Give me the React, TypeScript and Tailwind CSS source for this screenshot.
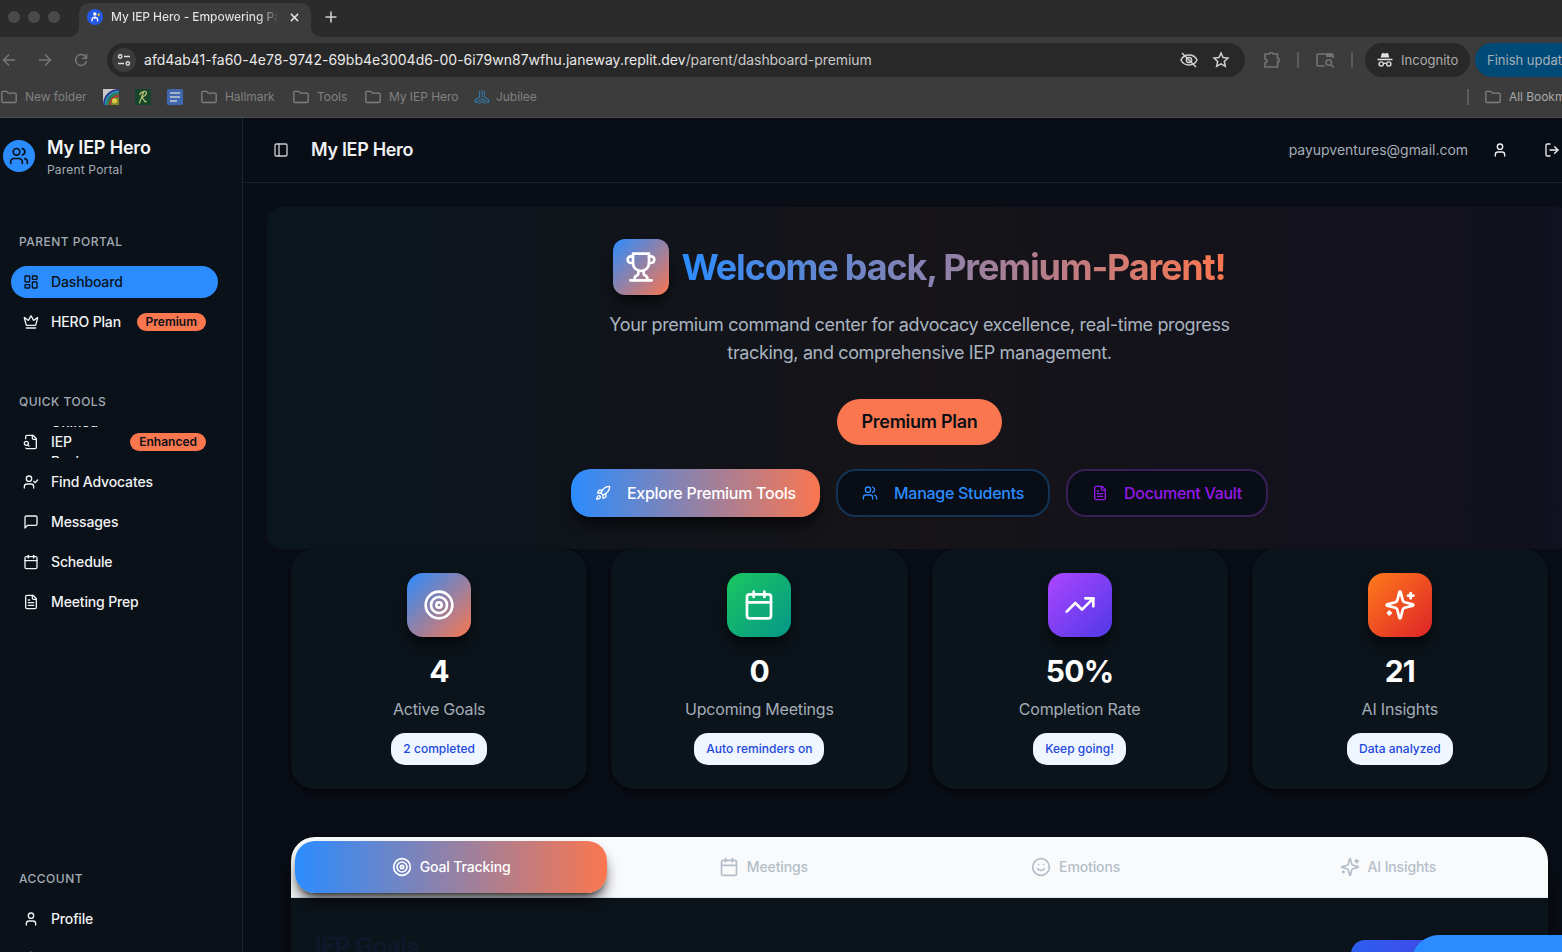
import React from "react";

type IconProps = { className?: string; strokeWidth?: number };

function Svg({ className, strokeWidth = 2, children }: IconProps & { children: React.ReactNode }) {
  return (
    <svg
      viewBox="0 0 24 24"
      fill="none"
      stroke="currentColor"
      strokeWidth={strokeWidth}
      strokeLinecap="round"
      strokeLinejoin="round"
      className={`shrink-0 ${className ?? ""}`}
    >
      {children}
    </svg>
  );
}

const Users = (p: IconProps) => (
  <Svg {...p}>
    <path d="M16 21v-2a4 4 0 0 0-4-4H6a4 4 0 0 0-4 4v2" />
    <circle cx="9" cy="7" r="4" />
    <path d="M22 21v-2a4 4 0 0 0-3-3.87" />
    <path d="M16 3.13a4 4 0 0 1 0 7.75" />
  </Svg>
);
const Dashboard = (p: IconProps) => (
  <Svg {...p}>
    <rect width="7" height="9" x="3" y="3" rx="1" />
    <rect width="7" height="5" x="14" y="3" rx="1" />
    <rect width="7" height="9" x="14" y="12" rx="1" />
    <rect width="7" height="5" x="3" y="16" rx="1" />
  </Svg>
);
const Crown = (p: IconProps) => (
  <Svg {...p}>
    <path d="M11.562 3.266a.5.5 0 0 1 .876 0L15.39 8.87a1 1 0 0 0 1.516.294L21.183 5.5a.5.5 0 0 1 .798.519l-2.834 10.246a1 1 0 0 1-.956.734H5.81a1 1 0 0 1-.957-.734L2.02 6.02a.5.5 0 0 1 .798-.519l4.276 3.664a1 1 0 0 0 1.516-.294z" />
    <path d="M5 21h14" />
  </Svg>
);
const FileSearch = (p: IconProps) => (
  <Svg {...p}>
    <path d="M14 2v4a2 2 0 0 0 2 2h4" />
    <path d="M4.268 21a2 2 0 0 0 1.727 1H18a2 2 0 0 0 2-2V7l-5-5H6a2 2 0 0 0-2 2v3" />
    <path d="m9 18-1.5-1.5" />
    <circle cx="5" cy="14" r="3" />
  </Svg>
);
const UserCheck = (p: IconProps) => (
  <Svg {...p}>
    <path d="M16 21v-2a4 4 0 0 0-4-4H6a4 4 0 0 0-4 4v2" />
    <circle cx="9" cy="7" r="4" />
    <path d="m16 11 2 2 4-4" />
  </Svg>
);
const Message = (p: IconProps) => (
  <Svg {...p}>
    <path d="M21 15a2 2 0 0 1-2 2H7l-4 4V5a2 2 0 0 1 2-2h14a2 2 0 0 1 2 2z" />
  </Svg>
);
const Calendar = (p: IconProps) => (
  <Svg {...p}>
    <path d="M8 2v4" />
    <path d="M16 2v4" />
    <rect width="18" height="18" x="3" y="4" rx="2" />
    <path d="M3 10h18" />
  </Svg>
);
const FileText = (p: IconProps) => (
  <Svg {...p}>
    <path d="M15 2H6a2 2 0 0 0-2 2v16a2 2 0 0 0 2 2h12a2 2 0 0 0 2-2V7Z" />
    <path d="M14 2v4a2 2 0 0 0 2 2h4" />
    <path d="M10 9H8" />
    <path d="M16 13H8" />
    <path d="M16 17H8" />
  </Svg>
);
const User = (p: IconProps) => (
  <Svg {...p}>
    <path d="M19 21v-2a4 4 0 0 0-4-4H9a4 4 0 0 0-4 4v2" />
    <circle cx="12" cy="7" r="4" />
  </Svg>
);
const Gear = (p: IconProps) => (
  <Svg {...p}>
    <path d="M12.22 2h-.44a2 2 0 0 0-2 2v.18a2 2 0 0 1-1 1.73l-.43.25a2 2 0 0 1-2 0l-.15-.08a2 2 0 0 0-2.73.73l-.22.38a2 2 0 0 0 .73 2.73l.15.1a2 2 0 0 1 1 1.72v.51a2 2 0 0 1-1 1.74l-.15.09a2 2 0 0 0-.73 2.73l.22.38a2 2 0 0 0 2.73.73l.15-.08a2 2 0 0 1 2 0l.43.25a2 2 0 0 1 1 1.73V20a2 2 0 0 0 2 2h.44a2 2 0 0 0 2-2v-.18a2 2 0 0 1 1-1.73l.43-.25a2 2 0 0 1 2 0l.15.08a2 2 0 0 0 2.73-.73l.22-.39a2 2 0 0 0-.73-2.73l-.15-.08a2 2 0 0 1-1-1.74v-.5a2 2 0 0 1 1-1.74l.15-.09a2 2 0 0 0 .73-2.73l-.22-.38a2 2 0 0 0-2.73-.73l-.15.08a2 2 0 0 1-2 0l-.43-.25a2 2 0 0 1-1-1.73V4a2 2 0 0 0-2-2z" />
    <circle cx="12" cy="12" r="3" />
  </Svg>
);
const PanelLeft = (p: IconProps) => (
  <Svg {...p}>
    <rect width="18" height="18" x="3" y="3" rx="2" />
    <path d="M9 3v18" />
  </Svg>
);
const LogOut = (p: IconProps) => (
  <Svg {...p}>
    <path d="M9 21H5a2 2 0 0 1-2-2V5a2 2 0 0 1 2-2h4" />
    <path d="m16 17 5-5-5-5" />
    <path d="M21 12H9" />
  </Svg>
);
const Trophy = (p: IconProps) => (
  <Svg {...p}>
    <path d="M6 9H4.5a2.5 2.5 0 0 1 0-5H6" />
    <path d="M18 9h1.5a2.5 2.5 0 0 0 0-5H18" />
    <path d="M4 22h16" />
    <path d="M10 14.66V17c0 .55-.47.98-.97 1.21C7.85 18.75 7 20.24 7 22" />
    <path d="M14 14.66V17c0 .55.47.98.97 1.21C16.15 18.75 17 20.24 17 22" />
    <path d="M18 2H6v7a6 6 0 0 0 12 0V2Z" />
  </Svg>
);
const Rocket = (p: IconProps) => (
  <Svg {...p}>
    <path d="M4.5 16.5c-1.5 1.26-2 5-2 5s3.74-.5 5-2c.71-.84.7-2.13-.09-2.91a2.18 2.18 0 0 0-2.91-.09z" />
    <path d="m12 15-3-3a22 22 0 0 1 2-3.95A12.88 12.88 0 0 1 22 2c0 2.72-.78 7.5-6 11a22.35 22.35 0 0 1-4 2z" />
    <path d="M9 12H4s.55-3.03 2-4c1.62-1.08 5 0 5 0" />
    <path d="M12 15v5s3.03-.55 4-2c1.08-1.62 0-5 0-5" />
  </Svg>
);
const Target = (p: IconProps) => (
  <Svg {...p}>
    <circle cx="12" cy="12" r="10" />
    <circle cx="12" cy="12" r="6" />
    <circle cx="12" cy="12" r="2" />
  </Svg>
);
const Trending = (p: IconProps) => (
  <Svg {...p}>
    <path d="M22 7 13.5 15.5 8.5 10.5 2 17" />
    <path d="M16 7h6v6" />
  </Svg>
);
const Sparkles = (p: IconProps) => (
  <Svg {...p}>
    <path d="M9.937 15.5A2 2 0 0 0 8.5 14.063l-6.135-1.582a.5.5 0 0 1 0-.962L8.5 9.936A2 2 0 0 0 9.937 8.5l1.582-6.135a.5.5 0 0 1 .963 0L14.063 8.5A2 2 0 0 0 15.5 9.937l6.135 1.581a.5.5 0 0 1 0 .964L15.5 14.063a2 2 0 0 0-1.437 1.437l-1.582 6.135a.5.5 0 0 1-.963 0z" />
    <path d="M20 3v4" />
    <path d="M22 5h-4" />
    <path d="M4 17v2" />
    <path d="M5 18H3" />
  </Svg>
);
const Smile = (p: IconProps) => (
  <Svg {...p}>
    <circle cx="12" cy="12" r="10" />
    <path d="M8 14s1.5 2 4 2 4-2 4-2" />
    <path d="M9 9h.01" />
    <path d="M15 9h.01" />
  </Svg>
);
const FolderIcon = () => (
  <svg viewBox="0 0 16 14" className="h-[14px] w-4 shrink-0" fill="none" stroke="currentColor" strokeWidth="1.3" strokeLinejoin="round">
    <path d="M.8 11.3V2.6c0-.7.5-1.2 1.2-1.2h3.7l1.7 1.8H14c.7 0 1.2.5 1.2 1.2v6.9c0 .7-.5 1.2-1.2 1.2H2c-.7 0-1.2-.5-1.2-1.2z" />
  </svg>
);

function TabStrip() {
  return (
    <div className="flex h-[37px] items-end bg-[#2b2b2b]">
      <div className="mb-[14px] ml-2 flex w-[71px] gap-2">
        <span className="size-3 rounded-full bg-[#4a4a4a]" />
        <span className="size-3 rounded-full bg-[#4a4a4a]" />
        <span className="size-3 rounded-full bg-[#4a4a4a]" />
      </div>
      <div className="relative flex h-[34px] w-[232px] items-center rounded-t-[10px] bg-[#3c3c3c] pb-[6px] pl-2 pr-[12px]">
        <svg viewBox="0 0 10 10" className="absolute -left-[10px] bottom-0 size-[10px]">
          <path d="M10 0v10H0A10 10 0 0 0 10 0z" fill="#3c3c3c" />
        </svg>
        <svg viewBox="0 0 10 10" className="absolute -right-[10px] bottom-0 size-[10px]">
          <path d="M0 0v10h10A10 10 0 0 1 0 0z" fill="#3c3c3c" />
        </svg>
        <svg viewBox="0 0 16 16" className="size-4 shrink-0">
          <circle cx="8" cy="8" r="8" fill="#2459e6" />
          <circle cx="7.8" cy="5" r="1.7" fill="#fff" />
          <path d="M4.800 12.300l.6-3 2.400-1.300 2.400 1.300.6 3M7.800 8v2" stroke="#fff" strokeWidth="1.300" fill="none" />
          <circle cx="11.700" cy="5.800" r="1.200" fill="#f5c518" />
        </svg>
        <span className="ml-2 w-[168px] overflow-hidden whitespace-nowrap bg-linear-to-r from-[#e3e3e3] from-88% to-transparent bg-clip-text text-[12px] font-medium tracking-[-0.06px] text-transparent">
          My IEP Hero - Empowering Parents
        </span>
        <svg viewBox="0 0 10 10" className="ml-auto size-[9px] shrink-0" stroke="#dedede" strokeWidth="1.7">
          <path d="M1 1l8 8M9 1l-8 8" />
        </svg>
      </div>
      <svg viewBox="0 0 12 12" className="mb-[14px] ml-[14px] size-[12px]" stroke="#d0d0d0" strokeWidth="1.6">
        <path d="M6 0.500v11M0.500 6h11" />
      </svg>
    </div>
  );
}

function Toolbar() {
  return (
    <div className="flex h-[46px] w-[1620px] items-center">
      <svg viewBox="0 0 90 16" className="h-4 w-[90px] shrink-0" fill="none" stroke="#777" strokeWidth="1.5">
        <path d="M15 8H3.5M9 2.5L3.5 8 9 13.5" />
        <path d="M39 8h11.500M45 2.500L50.500 8 45 13.500" />
        <path d="M86 5.500A5.500 5.500 0 1 0 86.500 9M86.500 2v4.300h-4.300" />
      </svg>
      <div className="ml-[17px] flex h-[34px] w-[1138px] items-center rounded-full bg-[#282828] pl-[5px] pr-[15px]">
        <span className="flex size-6 items-center justify-center rounded-full bg-[#3c3c3c]">
          <svg viewBox="0 0 14 14" className="size-[14px]" fill="none" stroke="#ddd" strokeWidth="1.4">
            <circle cx="3.200" cy="3.500" r="1.700" />
            <path d="M7 3.500h6M1 10.500h6" />
            <circle cx="10.800" cy="10.500" r="1.700" />
          </svg>
        </span>
        <span className="mb-0.5 ml-2 whitespace-nowrap text-[14px] tracking-[0.02px] text-[#e8e8e8]">
          afd4ab41-fa60-4e78-9742-69bb4e3004d6-00-6i79wn87wfhu.janeway.replit.dev
          <span className="tracking-[-0.07px] text-[#c8c8c8]">/parent/dashboard-premium</span>
        </span>
        <svg viewBox="0 0 18 18" className="ml-auto size-[18px]" fill="none" stroke="#d0d0d0" strokeWidth="1.500">
          <path d="M1 9c1.500-3.300 4.500-5 8-5s6.500 1.700 8 5c-1.500 3.300-4.500 5-8 5s-6.500-1.700-8-5z" />
          <circle cx="9" cy="9" r="2.600" />
          <path d="M2 2l14 14" />
        </svg>
        <svg viewBox="0 0 24 24" className="ml-[14px] size-[18px]" fill="none" stroke="#d0d0d0" strokeWidth="2">
          <path d="M12 2.800l2.800 6 6.500.7-4.900 4.400 1.400 6.500-5.800-3.300-5.800 3.300 1.400-6.500L2.700 9.500l6.500-.7z" />
        </svg>
      </div>
      <svg viewBox="0 0 18 18" className="ml-[18px] size-[18px]" fill="none" stroke="#737373" strokeWidth="1.600">
        <path d="M2 3h4.500c0-2 3.500-2 3.500 0h4.500v4.500c2.300 0 2.300 3.500 0 3.500v5H2v-4.500c2.800 0 2.800-3.500 0-3.500z" />
      </svg>
      <span className="ml-4 h-4 w-[2px] bg-[#5c5c5c]" />
      <svg viewBox="0 0 18 16" className="ml-[17px] h-4 w-[18px]" fill="none" stroke="#737373" strokeWidth="1.600">
        <path d="M8.500 14H2.200A1.200 1.200 0 0 1 1 12.800V3.200A1.200 1.200 0 0 1 2.200 2h13.600A1.200 1.200 0 0 1 17 3.200V6" />
        <path d="M10 1.500h7V5h-7z" fill="#737373" stroke="none" />
        <circle cx="12.800" cy="10.500" r="2.700" />
        <path d="M14.800 12.500l3 3" />
      </svg>
      <span className="ml-[17px] h-4 w-[2px] bg-[#5c5c5c]" />
      <div className="ml-[12px] flex h-[34px] w-[105px] items-center rounded-full bg-[#282828] pl-3">
        <svg viewBox="0 0 16 16" className="size-4" fill="#e0e0e0">
          <path d="M3.600 5.500L4.800 1.600c.2-.6.7-.8 1.200-.6l2 .6 2-.6c.5-.2 1 0 1.200.6l1.200 3.900zM.5 6.700h15v1.500H.5z" />
          <g fill="none" stroke="#e0e0e0" strokeWidth="1.400">
            <circle cx="4.200" cy="12" r="2.100" />
            <circle cx="11.800" cy="12" r="2.100" />
            <path d="M6.300 11.800c1-.8 2.400-.8 3.400 0" />
          </g>
        </svg>
        <span className="ml-2 mt-0.5 text-[13px] tracking-[0.02px] text-[#adadad]">Incognito</span>
      </div>
      <div className="ml-[5px] flex h-[34px] w-[140px] items-center whitespace-nowrap rounded-full bg-[#004a77] pl-3 pt-0.5 text-[13px] text-[#a5b0b8]">
        Finish update
      </div>
    </div>
  );
}

function Bookmark({ label, className }: { label: string; className: string }) {
  return (
    <span className={`flex items-center gap-2 ${className}`}>
      <FolderIcon />
      {label}
    </span>
  );
}

function Bookmarks() {
  return (
    <div className="flex h-[34px] w-[1640px] items-center whitespace-nowrap pb-[7px] text-[12px] tracking-[-0.05px] text-[#808080]">
      <Bookmark label="New folder" className="ml-px w-[102px]" />
      <svg viewBox="0 0 16 16" className="size-4">
        <path d="M0 0h16v16H0z" fill="#c9c9c9" />
        <path d="M16 0v16H0C0 6 7 0 16 0z" fill="#27358a" />
        <g fill="none" strokeWidth="1.800">
          <path d="M2.500 16C3 8 8 3 16 2.500" stroke="#2f9bb0" />
          <path d="M4.700 16C5 9.500 9.500 5.200 16 4.700" stroke="#358c3e" />
          <path d="M6.700 16C7 11 11 7.200 16 6.700" stroke="#c33a2c" />
        </g>
        <path d="M8 16c0-5 3-8 8-8v8z" fill="#7d8a28" />
        <circle cx="11.500" cy="11.800" r="2.600" fill="#d8cb48" />
      </svg>
      <svg viewBox="0 0 16 16" className="ml-4 size-4">
        <path d="M0 0h16v16H0z" fill="#17452b" />
        <path d="M4.800 5.500C5.500 2.800 11.500 1 11.500 3.800c0 2.600-3.500 4-5 4.200 2 .3 2 5.200 4.700 4.700M8.500 3.500C7 7 6 10 4.500 13.800" fill="none" stroke="#b6c275" strokeWidth="1.300" strokeLinecap="round" />
      </svg>
      <svg viewBox="0 0 16 16" className="ml-4 size-4">
        <rect width="16" height="16" rx="1.500" fill="#4068b0" />
        <path d="M3 4h10M3 8h10M3 12h7" stroke="#c8ccd4" strokeWidth="1.700" />
      </svg>
      <Bookmark label="Hallmark" className="ml-[18px] w-[92px]" />
      <Bookmark label="Tools" className="w-[72px]" />
      <Bookmark label="My IEP Hero" className="w-[109px]" />
      <svg viewBox="0 0 16 16" className="size-4" fill="none" stroke="#2f7ba3" strokeWidth="1.100">
        <path d="M5.600 2v6L1.300 10.700v3M10.400 2v6l4.300 2.700v3M8 1v7.500M1.500 13.800L8 9.800l6.500 4M4.500 14.500L8 12.400l3.500 2.100" />
      </svg>
      <span className="ml-[6px] w-[41px]">Jubilee</span>
      <span className="ml-[930px] h-4 w-[2px] bg-[#5c5c5c]" />
      <span className="ml-4 flex items-center gap-2 text-[#808080]">
        <FolderIcon />
        <span className="text-[#a8a8a8]">All Bookmarks</span>
      </span>
    </div>
  );
}

function NavItem({
  icon: Icon,
  label,
  badge,
  active,
}: {
  icon: React.ComponentType<IconProps>;
  label: string;
  badge?: string;
  active?: boolean;
}) {
  return (
    <div
      className={`flex h-8 shrink-0 items-center overflow-hidden rounded-full px-3 text-[14px] font-medium leading-5 tracking-[-0.15px] ${
        active ? "bg-[#2b8cff] text-[#0a1118]" : "text-[#f1f3f5]"
      }`}
    >
      <Icon className="size-4" />
      <span className={`ml-3 ${badge === "Enhanced" ? "w-[60px] text-left" : ""}`}>{label}</span>
      {badge && (
        <span className="ml-auto flex h-[18px] items-center rounded-full bg-[#fa764f] px-[9px] text-[12px] font-semibold leading-none tracking-normal text-[#0a1118]">
          {badge}
        </span>
      )}
    </div>
  );
}

function SectionLabel({ children }: { children: string }) {
  return (
    <div className="flex h-8 shrink-0 items-center pl-2 text-[12px] font-medium tracking-[0.48px] text-[#a3abb5]">{children}</div>
  );
}

function Sidebar() {
  return (
    <aside className="flex w-[243px] shrink-0 flex-col border-r border-[#172533] bg-[#0a1118]">
      <div className="flex h-[108px] shrink-0 gap-3 pl-[3px] pt-[19px]">
        <span className="mt-[3px] flex size-8 items-center justify-center rounded-full bg-[#2b8cff] text-[#0a1118]">
          <Users className="size-5" />
        </span>
        <div>
          <div className="text-[18px] font-semibold leading-[22px] tracking-[-0.18px] text-[#f5f6f8]">My IEP Hero</div>
          <div className="mt-[3px] text-[12px] leading-4 tracking-[0.18px] text-[#a3abb5]">Parent Portal</div>
        </div>
      </div>
      <div className="flex flex-col pl-[11px] pr-6">
        <SectionLabel>PARENT PORTAL</SectionLabel>
        <div className="mt-2 flex flex-col gap-2">
          <NavItem icon={Dashboard} label="Dashboard" active />
          <NavItem icon={Crown} label="HERO Plan" badge="Premium" />
        </div>
        <div className="mt-12">
          <SectionLabel>QUICK TOOLS</SectionLabel>
        </div>
        <div className="mt-2 flex flex-col gap-2">
          <NavItem icon={FileSearch} label="Unified IEP Review" badge="Enhanced" />
          <NavItem icon={UserCheck} label="Find Advocates" />
          <NavItem icon={Message} label="Messages" />
          <NavItem icon={Calendar} label="Schedule" />
          <NavItem icon={FileText} label="Meeting Prep" />
        </div>
      </div>
      <div className="mt-auto flex h-[89px] shrink-0 flex-col overflow-hidden pl-[11px] pr-6">
        <SectionLabel>ACCOUNT</SectionLabel>
        <div className="mt-2 flex flex-col gap-2">
          <NavItem icon={User} label="Profile" />
          <NavItem icon={Gear} label="Settings" />
        </div>
      </div>
    </aside>
  );
}

function Hero() {
  return (
    <section className="flex h-[342px] flex-col items-center rounded-2xl bg-linear-to-r/srgb from-[#0a151e] via-[#161418] to-[#11111f] pt-8">
      <div className="flex items-center gap-3">
        <span className="flex size-14 items-center justify-center rounded-xl bg-linear-to-br/srgb from-[#2b8cff] to-[#fa764f] text-white shadow-lg shadow-black/60">
          <Trophy className="size-8" />
        </span>
        <h1 className="whitespace-nowrap bg-linear-to-r/srgb from-[#2b8cff] to-[#fa764f] bg-clip-text pt-px text-[36px] font-bold leading-[45px] tracking-[-1.18px] text-transparent">
          Welcome back, Premium-Parent!
        </h1>
      </div>
      <p className="mt-4 w-[672px] text-center text-[18px] leading-7 tracking-[-0.37px] text-[#a9b4c0]">
        Your premium command center for advocacy excellence, real-time progress
        <br />
        tracking, and comprehensive IEP management.
      </p>
      <span className="mt-8 flex h-[46px] w-[165px] items-center justify-center rounded-full bg-[#fa764f] pb-px text-[18px] font-semibold tracking-[-0.27px] text-[#0a0f16]">
        Premium Plan
      </span>
      <div className="mt-6 flex gap-4 text-[16px] font-medium tracking-[-0.28px]">
        <button className="flex h-12 w-[249px] items-center rounded-[20px] bg-linear-to-r/srgb from-[#2b8cff] to-[#fa764f] pl-6 text-white shadow-lg shadow-black/60">
          <Rocket className="size-4" />
          <span className="ml-4">Explore Premium Tools</span>
        </button>
        <button className="flex h-12 w-[214px] items-center rounded-[20px] border-2 border-[#133356] bg-[#090d15] pl-6 text-[#2b8cff]">
          <Users className="size-4" />
          <span className="ml-4">Manage Students</span>
        </button>
        <button className="flex h-12 w-[202px] items-center rounded-[20px] border-2 border-[#382057] bg-[#090d15] pl-6 text-[#9418ea]">
          <FileText className="size-4" />
          <span className="ml-4">Document Vault</span>
        </button>
      </div>
    </section>
  );
}

const stats = [
  { icon: Target, value: "4", label: "Active Goals", note: "2 completed", tint: "from-[#2b8cff] to-[#fa764f]" },
  { icon: Calendar, value: "0", label: "Upcoming Meetings", note: "Auto reminders on", tint: "from-[#1bc75f] to-[#059689]" },
  { icon: Trending, value: "50%", label: "Completion Rate", note: "Keep going!", tint: "from-[#ad46ff] to-[#4f39e6]" },
  { icon: Sparkles, value: "21", label: "AI Insights", note: "Data analyzed", tint: "from-[#ff7b1c] to-[#dd2328]" },
];

function Stats() {
  return (
    <div className="grid grid-cols-4 gap-6 px-6">
      {stats.map(({ icon: Icon, value, label, note, tint }) => (
        <div key={label} className="flex h-60 flex-col items-center rounded-3xl bg-[#0c141b] pt-6 shadow-md shadow-black/50">
          <span className={`flex size-16 items-center justify-center rounded-2xl bg-linear-to-br/srgb text-white shadow-lg shadow-black/60 ${tint}`}>
            <Icon className="size-8" />
          </span>
          <div className="mt-4 text-[30px] font-bold leading-9 tracking-[-0.7px] text-white">{value}</div>
          <div className="mt-2 text-[16px] leading-6 tracking-[-0.2px] text-[#a3adb8]">{label}</div>
          <span className="mt-3 flex h-8 items-center rounded-[14px] bg-[#eff6ff] px-3 text-[12px] font-medium tracking-[0.02px] text-[#1d47dc]">{note}</span>
        </div>
      ))}
    </div>
  );
}

const tabs = [
  { icon: Target, label: "Goal Tracking" },
  { icon: Calendar, label: "Meetings" },
  { icon: Smile, label: "Emotions" },
  { icon: Sparkles, label: "AI Insights" },
];

function Panel() {
  return (
    <section className="mx-6 mt-12 h-[240px] overflow-hidden rounded-t-3xl bg-[#0c141b] shadow-xl shadow-black/60">
      <div className="grid h-[61px] grid-cols-4 border-b border-[#e2e8f0] bg-[#f9fafc] px-1 pt-1">
        {tabs.map(({ icon: Icon, label }, i) => (
          <div
            key={label}
            className={`flex h-[52px] items-center justify-center gap-2 text-[14px] font-medium tracking-[-0.13px] ${
              i === 0
                ? "rounded-[20px] bg-linear-to-r/srgb from-[#2b8cff] to-[#fa764f] text-white shadow-lg shadow-black/70"
                : "text-[#b4bec9]"
            }`}
          >
            <Icon className="size-5" />
            <span className="mb-0.5">{label}</span>
          </div>
        ))}
      </div>
      <div className="flex justify-between px-6 pt-8">
        <h2 className="mt-px text-[24px] font-bold leading-8 tracking-[-0.6px] text-[#0f172b]">IEP Goals</h2>
        <span className="mt-[10px] h-10 w-[173px] rounded-[14px] bg-linear-to-r from-[#2b5cee] to-[#4f39e6]" />
      </div>
    </section>
  );
}

export default function App() {
  return (
    <div className="relative flex h-[952px] w-full flex-col overflow-hidden bg-[#090d15] font-['Inter',sans-serif]">
      <div className="h-[118px] shrink-0 overflow-hidden border-b border-[#4a4a4a] bg-[#3c3c3c]">
        <TabStrip />
        <Toolbar />
        <Bookmarks />
      </div>
      <div className="flex h-[834px]">
        <Sidebar />
        <main className="w-[1353px] shrink-0">
          <header className="flex h-[65px] items-center border-b border-[#142330] pl-[30px] text-[#eef0f3]">
            <PanelLeft className="size-4 text-[#c9cdd2]" />
            <span className="mb-0.5 ml-[22px] text-[18px] font-semibold tracking-[-0.32px]">My IEP Hero</span>
            <span className="mb-0.5 ml-auto text-[14px] tracking-[-0.03px] text-[#a3adb8]">payupventures@gmail.com</span>
            <User className="ml-6 size-4" />
            <LogOut className="ml-9 mr-[36px] size-4" />
          </header>
          <div className="px-6 pt-6">
            <Hero />
            <Stats />
            <Panel />
          </div>
        </main>
      </div>
      <div className="absolute left-[1411px] top-[935px] h-14 w-[180px] rounded-[28px] bg-[#2b8cff] shadow-lg shadow-black/70" />
    </div>
  );
}
